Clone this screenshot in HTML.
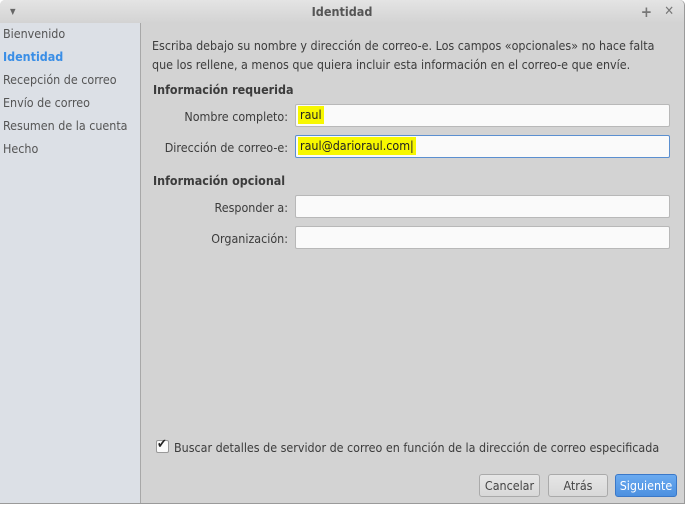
<!DOCTYPE html>
<html><head><style>
body{margin:0;width:685px;height:505px;background:#fff;font-family:"DejaVu Sans Condensed","Liberation Sans",sans-serif;font-size:12.4px;color:#3c3c3c;position:relative;overflow:hidden}
.win{position:absolute;left:0;top:0;width:684px;height:503px;background:#d3d3d3;border-right:1px solid #9a9a9a;border-bottom:1px solid #9a9a9a;border-top-left-radius:5px;border-top-right-radius:5px}
.title{position:absolute;left:0;top:0;width:684px;height:23px;background:linear-gradient(#e4e4e4,#d3d3d3);text-align:center;line-height:24px;font-weight:bold;color:#555;font-size:12.5px;border-top-left-radius:5px;border-top-right-radius:5px}
.side{position:absolute;left:0;top:23px;width:140px;height:480px;background:#dce0e6;border-right:1px solid #a8a8a8}
.side div{position:absolute;left:3px;color:#555}
.a{position:absolute;white-space:nowrap}
.inp{position:absolute;left:295px;width:375px;height:23px;background:#fafafa;border:1px solid #b8b8b8;border-radius:2px;box-sizing:border-box}
.hl{position:absolute;background:#f7f700;color:#222;padding:0 2px;line-height:18px;top:1px;left:2px}
.btn{position:absolute;top:474px;height:23px;border:1px solid #aaa;border-radius:3px;background:linear-gradient(#e6e6e6,#d8d8d8);text-align:center;line-height:22px;box-sizing:border-box;color:#444}
</style></head><body>
<div class="win">
<div class="title">Identidad<span style="position:absolute;left:10px;top:0;font-size:8px;color:#666">▼</span><span style="position:absolute;right:32px;top:0;color:#777;font-size:15px">+</span><span style="position:absolute;right:10px;top:0;color:#777;font-size:13px">✕</span></div>
<div class="side">
<div style="top:3px">Bienvenido</div>
<div style="top:26px;color:#3a8ee6;font-weight:bold">Identidad</div>
<div style="top:49px">Recepción de correo</div>
<div style="top:72px">Envío de correo</div>
<div style="top:95px">Resumen de la cuenta</div>
<div style="top:118px">Hecho</div>
</div>
<div class="a" style="left:152px;top:36px;line-height:19px">Escriba debajo su nombre y dirección de correo-e. Los campos «opcionales» no hace falta<br>que los rellene, a menos que quiera incluir esta información en el correo-e que envíe.</div>
<div class="a" style="left:153px;top:82px;font-weight:bold">Información requerida</div>
<div class="a" style="right:396px;top:109px">Nombre completo:</div>
<div class="inp" style="top:104px"><span class="hl">raul</span></div>
<div class="a" style="right:396px;top:140px">Dirección de correo-e:</div>
<div class="inp" style="top:135px;border-color:#5b8fd0"><span class="hl">raul@darioraul.com|</span></div>
<div class="a" style="left:153px;top:173px;font-weight:bold">Información opcional</div>
<div class="a" style="right:396px;top:200px">Responder a:</div>
<div class="inp" style="top:195px"></div>
<div class="a" style="right:396px;top:231px">Organización:</div>
<div class="inp" style="top:226px"></div>
<div class="a" style="left:156px;top:440px;width:11px;height:11px;background:#fafafa;border:1px solid #999;border-radius:2px"></div>
<div class="a" style="left:157px;top:437px;font-size:13px;color:#222">✔</div>
<div class="a" style="left:174px;top:440px">Buscar detalles de servidor de correo en función de la dirección de correo especificada</div>
<div class="btn" style="left:479px;width:61px">Cancelar</div>
<div class="btn" style="left:548px;width:60px">Atrás</div>
<div class="btn" style="left:615px;width:62px;background:linear-gradient(#6aaaf0,#4c90e0);border-color:#3a78c8;color:#fff">Siguiente</div>
</div>
</body></html>
